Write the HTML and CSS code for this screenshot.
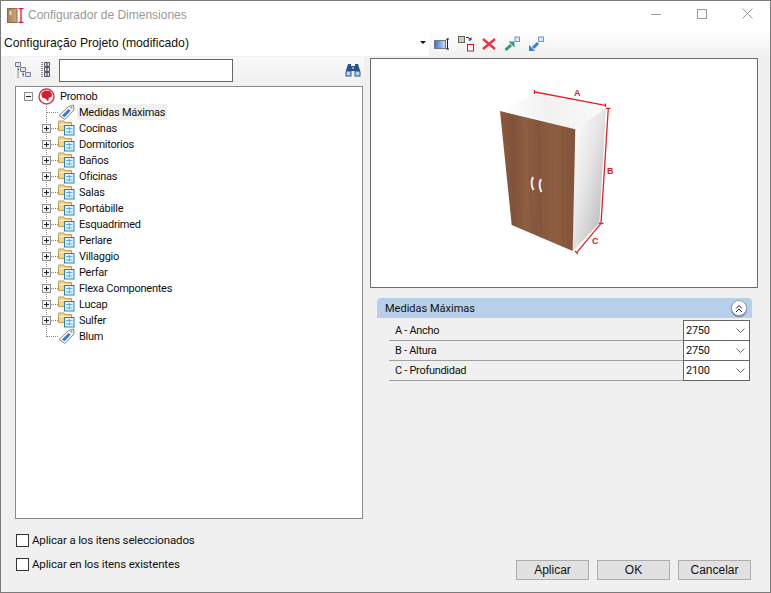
FILE: index.html
```html
<!DOCTYPE html>
<html lang="pt">
<head>
<meta charset="utf-8">
<title>Configurador de Dimensiones</title>
<link rel="stylesheet" href="styles.css">
</head>
<body>
<svg class="defs" width="0" height="0" aria-hidden="true">
  <defs>
    <symbol id="folder" viewBox="0 0 17 16">
      <path d="M.5 2.500V1h5.500l1 1.500h6.500v8H.5z" fill="#f8d283" stroke="#c39c52"/>
      <path d="M1 4.500h12" stroke="#fdf0cc"/>
      <rect x="6.500" y="5.500" width="9.500" height="9.500" fill="#e6f1fa" stroke="#1c82c4"/>
      <path d="M8 8.500h6.500M11.300 7v6.500M8 12h6.500" stroke="#6aa7d3" fill="none"/>
    </symbol>
    <symbol id="tag" viewBox="0 0 17 16">
      <path d="M1 11.500 10.500 2.500l5-1.500.5 5-9 9.500z" fill="#f6f6f6" stroke="#8a8a8a"/>
      <path d="M4 11.500 10.500 5l2 2-6 6.300z" fill="#2f7fd6"/>
      <circle cx="13.500" cy="3.500" r="1" fill="#888"/>
    </symbol>
  </defs>
</svg>
<div class="window">
  <header class="titlebar">
    <svg class="app-icon" width="17" height="15" viewBox="0 0 17 15">
      <defs><linearGradient id="door" x1="0" x2="1" y1="0" y2="0"><stop offset="0" stop-color="#a98258"/><stop offset="1" stop-color="#d0a67a"/></linearGradient></defs>
      <rect x="0.500" y=".5" width="9.500" height="14" fill="url(#door)" stroke="#8a6a48"/>
      <rect x="2.500" y="3" width="2" height="4" fill="#eadcc8"/>
      <path d="M11.500 .7h5M14 .7v13.600M11.500 14.300h5" stroke="#e8112d" stroke-width="1.300" fill="none"/>
    </svg>
    <span class="title">Configurador de Dimensiones</span>
    <div class="win-controls">
      <span class="win-btn"><svg width="10" height="10"><path d="M0 5.500h10" stroke="#999"/></svg></span>
      <span class="win-btn"><svg width="10" height="10"><rect x=".5" y=".5" width="9" height="9" fill="none" stroke="#999"/></svg></span>
      <span class="win-btn"><svg width="11" height="11"><path d="M.5.500l10 10M10.500.500l-10 10" stroke="#999"/></svg></span>
    </div>
  </header>

  <div class="toolbar">
    <div class="config-combo">
      <span>Configuração Projeto (modificado)</span>
      <i class="caret"></i>
    </div>
    <div class="tools">
      <svg width="16" height="14" viewBox="0 0 16 14"><defs><linearGradient id="scr"><stop offset="0" stop-color="#2f6fe0"/><stop offset="1" stop-color="#cfe0f8"/></linearGradient></defs><rect x=".5" y="3.500" width="11" height="8" fill="url(#scr)" stroke="#777"/><path d="M12 2h3M13.500 2v10M12 12h3" stroke="#222" fill="none"/></svg>
      <svg width="16" height="16" viewBox="0 0 16 16"><rect x=".5" y=".5" width="6" height="6" fill="#ccc" stroke="#665"/><path d="M8 1.500h2l3 2M13 1.500v2.500h-2.500" stroke="#13246e" fill="none"/><rect x="9.500" y="8.500" width="6" height="6.500" fill="#fff" stroke="#e30d1d"/></svg>
      <svg width="14" height="12" viewBox="0 0 14 12"><path d="M1 1l12 10M13 1L1 11" stroke="#f0303a" stroke-width="2.300"/></svg>
      <svg width="16" height="16" viewBox="0 0 16 16"><path d="M1.500 14 7 9" stroke="#2f9d6e" stroke-width="3"/><path d="M4.500 5.500h6v6z" fill="#2f9d6e"/><rect x="11" y="1" width="4.500" height="4.500" fill="#dbe8f8" stroke="#6f94d0"/></svg>
      <svg width="16" height="16" viewBox="0 0 16 16"><path d="M10 7 5 12" stroke="#3a7fd5" stroke-width="3"/><path d="M1 15V9l6 6z" fill="#3a7fd5"/><rect x="10.500" y="1" width="5" height="4.500" fill="#dbe8f8" stroke="#6f94d0"/></svg>
    </div>
  </div>

  <main class="content">
    <section class="left">
      <div class="tree-tools">
        <svg class="tree-ico" width="16" height="16" viewBox="0 0 16 16"><path d="M.5.5h5v4h-5zM5.500 5.500h5v4h-5zM10.500 10.500h5v4h-5z" fill="#e4e6ee" stroke="#77809a"/><path d="M3 4.500v11M8 9.500v6M3 7.500h2M8 12.500h2" stroke="#222" stroke-dasharray="1 1" fill="none"/></svg>
        <svg class="tree-ico second" width="10" height="16" viewBox="0 0 10 16"><path d="M3.500.5h5v4h-5zM3.500 5.500h5v4h-5zM3.500 10.500h5v4h-5z" fill="#e4e6ee" stroke="#556"/><path d="M1 0v16" stroke="#222" stroke-dasharray="1 1"/><path d="M6 1v3M6 6v3M6 11v3" stroke="#334"/></svg>
        <div class="search"></div>
        <svg class="binoc" width="16" height="14" viewBox="0 0 16 14">
          <path d="M3 1h3v2h4V1h3l2.500 8v4.500h-6V8H6.500v5.500h-6V9z" fill="#2a5290"/>
          <rect x="1.500" y="8.500" width="4" height="4" fill="#b7d3f2"/><rect x="10.500" y="8.500" width="4" height="4" fill="#b7d3f2"/>
          <rect x="7" y="4" width="2" height="2" fill="#7fa4d6"/>
        </svg>
      </div>

      <div class="tree">
        <div class="row root">
          <span class="exp minus"></span>
          <svg class="globe" width="17" height="17" viewBox="0 0 17 17"><circle cx="8.500" cy="8.500" r="7.500" fill="#fff" stroke="#e0323c" stroke-width="1.400"/><path d="M3.500 5 7 2.500l5 .5 2 3-.5 3-2.500.5-1 4-2-2.500-2-1-1.500 0-1-3z" fill="#d81e2c"/></svg>
          <span class="label">Promob</span>
        </div>
        <div class="row child"><span class="guide"></span><svg class="ico" width="17" height="16"><use href="#tag"/></svg><span class="label selected">Medidas Máximas</span></div>
        <div class="row child"><span class="guide"><i class="exp plus"></i></span><svg class="ico" width="17" height="16"><use href="#folder"/></svg><span class="label">Cocinas</span></div>
        <div class="row child"><span class="guide"><i class="exp plus"></i></span><svg class="ico" width="17" height="16"><use href="#folder"/></svg><span class="label">Dormitorios</span></div>
        <div class="row child"><span class="guide"><i class="exp plus"></i></span><svg class="ico" width="17" height="16"><use href="#folder"/></svg><span class="label">Baños</span></div>
        <div class="row child"><span class="guide"><i class="exp plus"></i></span><svg class="ico" width="17" height="16"><use href="#folder"/></svg><span class="label">Oficinas</span></div>
        <div class="row child"><span class="guide"><i class="exp plus"></i></span><svg class="ico" width="17" height="16"><use href="#folder"/></svg><span class="label">Salas</span></div>
        <div class="row child"><span class="guide"><i class="exp plus"></i></span><svg class="ico" width="17" height="16"><use href="#folder"/></svg><span class="label">Portábille</span></div>
        <div class="row child"><span class="guide"><i class="exp plus"></i></span><svg class="ico" width="17" height="16"><use href="#folder"/></svg><span class="label">Esquadrimed</span></div>
        <div class="row child"><span class="guide"><i class="exp plus"></i></span><svg class="ico" width="17" height="16"><use href="#folder"/></svg><span class="label">Perlare</span></div>
        <div class="row child"><span class="guide"><i class="exp plus"></i></span><svg class="ico" width="17" height="16"><use href="#folder"/></svg><span class="label">Villaggio</span></div>
        <div class="row child"><span class="guide"><i class="exp plus"></i></span><svg class="ico" width="17" height="16"><use href="#folder"/></svg><span class="label">Perfar</span></div>
        <div class="row child"><span class="guide"><i class="exp plus"></i></span><svg class="ico" width="17" height="16"><use href="#folder"/></svg><span class="label">Flexa Componentes</span></div>
        <div class="row child"><span class="guide"><i class="exp plus"></i></span><svg class="ico" width="17" height="16"><use href="#folder"/></svg><span class="label">Lucap</span></div>
        <div class="row child"><span class="guide"><i class="exp plus"></i></span><svg class="ico" width="17" height="16"><use href="#folder"/></svg><span class="label">Sulfer</span></div>
        <div class="row child last"><span class="guide"></span><svg class="ico" width="17" height="16"><use href="#tag"/></svg><span class="label">Blum</span></div>
      </div>

      <div class="checks">
        <label class="check"><i class="box"></i>Aplicar a los itens seleccionados</label>
        <label class="check"><i class="box"></i>Aplicar en los itens existentes</label>
      </div>
    </section>

    <section class="right">
      <div class="preview">
        <svg width="386" height="228" viewBox="371 59 386 228">
          <defs>
            <linearGradient id="wood" x1="0" x2="1" y1="0" y2="0">
              <stop offset="0" stop-color="#8b5a3b"/><stop offset=".18" stop-color="#80533a"/><stop offset=".35" stop-color="#8f5f41"/><stop offset=".5" stop-color="#84563c"/><stop offset=".72" stop-color="#8e5e40"/><stop offset="1" stop-color="#825338"/>
            </linearGradient>
            <linearGradient id="side" x1="0" x2="1" y1="0" y2="1">
              <stop offset="0" stop-color="#fff"/><stop offset=".45" stop-color="#e6e6e6"/><stop offset="1" stop-color="#aeaeae"/>
            </linearGradient>
            <linearGradient id="top" x1="0" x2="1" y1="0" y2="0">
              <stop offset="0" stop-color="#fff"/><stop offset=".45" stop-color="#f1f1f1"/><stop offset="1" stop-color="#fafafa"/>
            </linearGradient>
          </defs>
          <path d="M500 111 535 94 606 108 575 129z" fill="url(#top)"/>
          <path d="M575.300 129.300 606 108 599.300 223.300 572.700 251z" fill="url(#side)"/>
          <path d="M500 111 575.300 129.300 572.700 251 511.700 225z" fill="url(#wood)"/>
          <path d="M513 115 521 228M528 119 532 234M552 124 553 243M563 127 563 247" stroke="#6f4429" stroke-opacity=".15" fill="none"/>
          <path d="M539 121 541 238" stroke="#5d3a24" stroke-opacity=".2" fill="none"/>
          <path d="M535 92 605.300 105.300M608.300 108.300 601 223.300M601 223.300 576.700 252.700M605.500 103.500v3.500M606 108.300h4.500M599 223.300h4.500M575 251l3 3M534.500 90v4" stroke="#ee1c24" stroke-width="1.300" fill="none"/>
          <path d="M533 177q-3 6.500 0.500 13M541 179q-3 6.500 0.500 13" stroke="#e8e8e8" stroke-width="2.200" fill="none"/>
          <text x="574" y="96" class="dim">A</text>
          <text x="607" y="174" class="dim">B</text>
          <text x="592" y="244" class="dim">C</text>
        </svg>
      </div>

      <div class="panel">
        <div class="panel-head">
          <span>Medidas Máximas</span>
          <span class="collapse"><svg width="8" height="9" viewBox="0 0 8 9"><path d="M1 4.500 4 1.500l3 3M1 8 4 5l3 3" stroke="#223" fill="none"/></svg></span>
        </div>
        <div class="prop"><span class="prop-name">A - Ancho</span><div class="combo"><span>2750</span><svg width="9" height="5"><path d="M.5.500 4.500 4.500l4-4" stroke="#666" fill="none"/></svg></div></div>
        <div class="prop"><span class="prop-name">B - Altura</span><div class="combo"><span>2750</span><svg width="9" height="5"><path d="M.5.500 4.500 4.500l4-4" stroke="#666" fill="none"/></svg></div></div>
        <div class="prop"><span class="prop-name">C - Profundidad</span><div class="combo"><span>2100</span><svg width="9" height="5"><path d="M.5.500 4.500 4.500l4-4" stroke="#666" fill="none"/></svg></div></div>
      </div>

      <div class="actions">
        <button class="btn" type="button">Aplicar</button>
        <button class="btn" type="button">OK</button>
        <button class="btn" type="button">Cancelar</button>
      </div>
    </section>
  </main>
</div>
</body>
</html>
```
FILE: styles.css
```css
* { box-sizing: border-box; }
html, body { margin: 0; padding: 0; }
body { width: 771px; height: 593px; overflow: hidden; font-family: Roboto, "Liberation Sans", Arial, sans-serif; font-size: 12px; color: #111; }
.defs { position: absolute; }
.window { width: 771px; height: 593px; border: 1px solid #7a7a7a; background: #f0f0f0; display: flex; flex-direction: column; overflow: hidden; }

.titlebar { height: 29px; background: #fff; display: flex; align-items: center; padding: 0 0 1px 6px; flex: none; }
.app-icon { margin-right: 4px; }
.title { font: 12px "Liberation Sans", Arial, sans-serif; color: #999; }
.win-controls { margin-left: auto; margin-bottom: 3px; display: flex; }
.win-btn { width: 45.500px; height: 25px; display: flex; align-items: center; justify-content: center; }

.toolbar { height: 27px; flex: none; display: flex; align-items: center; background: linear-gradient(#fff, #f0f0f0); }
.config-combo { width: 428px; height: 24px; padding: 0 3px 2px; display: flex; align-items: center; justify-content: space-between; background: #fff; font: 12.200px "Liberation Sans", Arial, sans-serif; }
.caret { width: 0; height: 0; border: 3px solid transparent; border-top: 3px solid #111; border-bottom: 0; }
.tools { display: flex; align-items: center; gap: 8px; margin-left: 5px; }

.content { flex: 1; display: flex; min-height: 0; }
.left { width: 369px; padding-left: 14px; display: flex; flex-direction: column; }
.right { width: 400px; display: flex; flex-direction: column; }

.tree-tools { height: 29px; flex: none; display: flex; align-items: flex-start; padding: 4px 0 0 0; width: 349px; background: linear-gradient(#f8f8f8, #f0f0f0); }
.tree-ico { flex: none; margin-top: 1px; }
.tree-ico.second { margin-left: 10px; }
.search { width: 174px; height: 23px; margin-left: 8px; margin-top: -2px; background: #fff; border: 1px solid #666; }
.binoc { margin-left: auto; margin-right: 3px; margin-top: 2px; }

.tree { width: 348px; height: 433px; background: #fff; border: 1px solid #8a8a8a; padding-top: 1px; flex: none; font-size: 11px; letter-spacing: -.25px; }
.row { height: 16px; display: flex; align-items: center; white-space: nowrap; }
.label { height: 16px; line-height: 18px; padding: 0 2px; }
.root { padding-left: 8px; }
.root .globe { margin-left: 5px; margin-right: 3px; }
.exp { display: inline-block; position: relative; width: 9px; height: 9px; background: #f4f4f4; border: 1px solid #8e8e8e; flex: none; }
.exp::before { content: ""; position: absolute; left: 1px; right: 1px; top: 3px; height: 1px; background: #223; }
.plus::after { content: ""; position: absolute; top: 1px; bottom: 1px; left: 3px; width: 1px; background: #223; }
.child { padding-left: 27px; }
.guide { position: relative; width: 15px; height: 16px; flex: none; background:
  repeating-linear-gradient(#888 0 1px, transparent 1px 2px) 3px 0 / 1px 100% no-repeat,
  repeating-linear-gradient(90deg, #888 0 1px, transparent 1px 2px) 4px 8px / 11px 1px no-repeat; }
.last .guide { background:
  repeating-linear-gradient(#888 0 1px, transparent 1px 2px) 3px 0 / 1px 9px no-repeat,
  repeating-linear-gradient(90deg, #888 0 1px, transparent 1px 2px) 4px 8px / 11px 1px no-repeat; }
.guide .exp { position: absolute; left: -1px; top: 4px; }
.ico { flex: none; margin-right: 2px; }
.selected { background: #f0f0f0; }

.checks { margin-top: 14px; display: flex; flex-direction: column; gap: 10px; font-size: 11.500px; letter-spacing: -.15px; }
.check { display: flex; align-items: center; height: 14px; }
.box { width: 13px; height: 13px; background: #fff; border: 1px solid #333; margin: 0 3px 0 1px; flex: none; }

.preview { width: 388px; height: 230px; margin-top: 1px; background: #fff; border: 1px solid #6e6e6e; }
.preview svg { display: block; }
.dim { font: bold 9px "Liberation Sans", Arial, sans-serif; fill: #e0202a; }

.panel { width: 375px; margin: 10px 0 0 7px; }
.panel-head { height: 20px; background: #b8cfe9; border-radius: 4px 4px 0 0; display: flex; align-items: center; justify-content: space-between; padding: 0 5px 0 8px; font-size: 11px; }
.collapse { width: 16px; height: 16px; border-radius: 50%; background: #fff; border: 1px solid #8da3bd; display: flex; align-items: center; justify-content: center; box-shadow: 0 1px 1px #778; }
.prop { height: 20px; margin: 0 2px 0 12px; display: flex; justify-content: space-between; border-bottom: 1px solid #a0a0a0; padding-left: 6px; }
.panel-head + .prop { margin-top: 3px; }
.prop-name { font-size: 11px; letter-spacing: -.3px; line-height: 19px; }
.combo { width: 67px; height: 21px; margin-top: -1px; background: #fff; border: 1px solid #666; display: flex; align-items: center; justify-content: space-between; padding: 0 4px 0 2px; font-size: 11px; letter-spacing: -.3px; }

.actions { margin-top: auto; margin-bottom: 12px; display: flex; gap: 8px; padding-left: 146px; }
.btn { width: 73px; height: 20px; padding: 0; background: #e1e1e1; border: 1px solid #adadad; font: 12px "Liberation Sans", Arial, sans-serif; color: #111; }
```
